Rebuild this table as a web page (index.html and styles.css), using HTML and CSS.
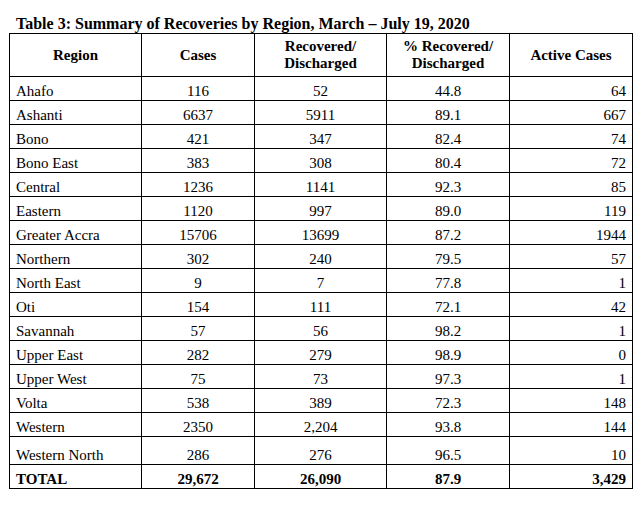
FILE: index.html
```html
<!DOCTYPE html>
<html lang="en">
<head>
<meta charset="utf-8">
<title>Table 3: Summary of Recoveries by Region</title>
<link rel="stylesheet" href="styles.css">
</head>
<body>
<div class="page">
  <h1 class="title">Table 3: Summary of Recoveries by Region, March – July 19, 2020</h1>
  <table class="summary">
    <colgroup>
      <col class="c-region">
      <col class="c-cases">
      <col class="c-rec">
      <col class="c-pct">
      <col class="c-active">
    </colgroup>
    <thead>
      <tr>
        <th>Region</th>
        <th>Cases</th>
        <th>Recovered/<br>Discharged</th>
        <th>% Recovered/<br>Discharged</th>
        <th>Active Cases</th>
      </tr>
    </thead>
    <tbody>
      <tr><td>Ahafo</td><td>116</td><td>52</td><td>44.8</td><td>64</td></tr>
      <tr><td>Ashanti</td><td>6637</td><td>5911</td><td>89.1</td><td>667</td></tr>
      <tr><td>Bono</td><td>421</td><td>347</td><td>82.4</td><td>74</td></tr>
      <tr><td>Bono East</td><td>383</td><td>308</td><td>80.4</td><td>72</td></tr>
      <tr><td>Central</td><td>1236</td><td>1141</td><td>92.3</td><td>85</td></tr>
      <tr><td>Eastern</td><td>1120</td><td>997</td><td>89.0</td><td>119</td></tr>
      <tr><td>Greater Accra</td><td>15706</td><td>13699</td><td>87.2</td><td>1944</td></tr>
      <tr><td>Northern</td><td>302</td><td>240</td><td>79.5</td><td>57</td></tr>
      <tr><td>North East</td><td>9</td><td>7</td><td>77.8</td><td>1</td></tr>
      <tr><td>Oti</td><td>154</td><td>111</td><td>72.1</td><td>42</td></tr>
      <tr><td>Savannah</td><td>57</td><td>56</td><td>98.2</td><td>1</td></tr>
      <tr><td>Upper East</td><td>282</td><td>279</td><td>98.9</td><td>0</td></tr>
      <tr><td>Upper West</td><td>75</td><td>73</td><td>97.3</td><td>1</td></tr>
      <tr><td>Volta</td><td>538</td><td>389</td><td>72.3</td><td>148</td></tr>
      <tr><td>Western</td><td>2350</td><td>2,204</td><td>93.8</td><td>144</td></tr>
      <tr class="tall"><td>Western North</td><td>286</td><td>276</td><td>96.5</td><td>10</td></tr>
      <tr class="total"><td>TOTAL</td><td>29,672</td><td>26,090</td><td>87.9</td><td>3,429</td></tr>
    </tbody>
  </table>
</div>
</body>
</html>
```

FILE: styles.css
```css
html, body {
  margin: 0;
  padding: 0;
  background: #fff;
}

.page {
  padding: 15px 0 0 9px;
  font-family: "Liberation Serif", "Times New Roman", serif;
  color: #000;
}

.title {
  margin: 0;
  padding-left: 7px;
  font-size: 16px;
  line-height: 18px;
  font-weight: bold;
}

.summary {
  border-collapse: collapse;
  table-layout: fixed;
  width: 623px;
  font-size: 15px;
  line-height: 17px;
}

.c-region { width: 132px; }
.c-cases { width: 113px; }
.c-rec { width: 132px; }
.c-pct { width: 123px; }
.c-active { width: 123px; }

.summary th,
.summary td {
  border: 1px solid #000;
  padding: 0;
}

.summary th {
  height: 42px;
  font-weight: bold;
  text-align: center;
  vertical-align: middle;
}

.summary td {
  height: 23px;
  vertical-align: bottom;
  text-align: center;
}

.summary td:first-child {
  text-align: left;
  padding-left: 6px;
}

.summary td:last-child {
  text-align: right;
  padding-right: 6px;
}

.summary tr.tall td {
  height: 27px;
}

.summary tr.total td {
  font-weight: bold;
}
```
